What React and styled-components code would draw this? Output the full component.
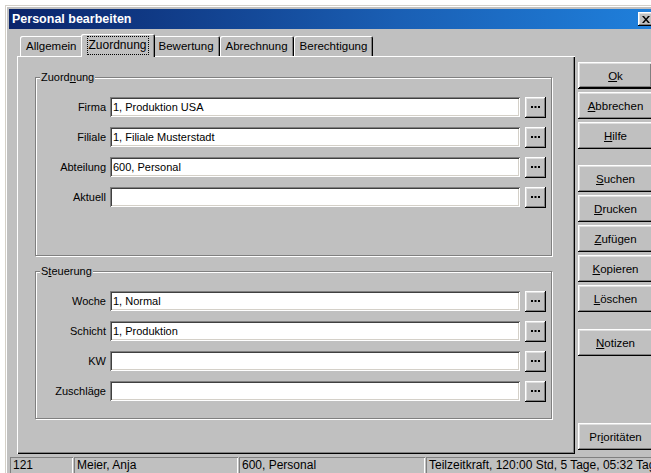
import React from 'react';
import styled, { createGlobalStyle } from 'styled-components';

const GlobalStyle = createGlobalStyle`
  html, body {
    margin: 0;
    padding: 0;
    background: #fff;
    overflow: hidden;
  }
  body {
    font-family: "Liberation Sans", Arial, sans-serif;
    font-size: 11px;
    color: #000;
  }
`;

const raised = `
  box-shadow: inset -1px -1px #000, inset 1px 1px #fff,
    inset -2px -2px #808080, inset 2px 2px #dfdfdf;
`;

const sunken = `
  box-shadow: inset 1px 1px #808080, inset -1px -1px #fff,
    inset 2px 2px #404040, inset -2px -2px #d4d0c8;
`;

const zuordnungRows = [
  { label: 'Firma', value: '1, Produktion USA' },
  { label: 'Filiale', value: '1, Filiale Musterstadt' },
  { label: 'Abteilung', value: '600, Personal' },
  { label: 'Aktuell', value: '' },
];

const steuerungRows = [
  { label: 'Woche', value: '1, Normal' },
  { label: 'Schicht', value: '1, Produktion' },
  { label: 'KW', value: '' },
  { label: 'Zuschläge', value: '' },
];

const tabs = ['Allgemein', 'Zuordnung', 'Bewertung', 'Abrechnung', 'Berechtigung'];

function Accel({ text, at }) {
  return (
    <>
      {text.slice(0, at)}
      <u>{text[at]}</u>
      {text.slice(at + 1)}
    </>
  );
}

function LookupRow({ label, value }) {
  return (
    <Row>
      <RowLabel>{label}</RowLabel>
      <TextBox>{value}</TextBox>
      <DotsButton>
        <svg width="9" height="3" viewBox="0 0 9 3">
          <rect x="0" y="0" width="2" height="2" fill="#000" />
          <rect x="3.5" y="0" width="2" height="2" fill="#000" />
          <rect x="7" y="0" width="2" height="2" fill="#000" />
        </svg>
      </DotsButton>
    </Row>
  );
}

function App() {
  return (
    <>
      <GlobalStyle />
      <Window>
        <TitleBar>
          <Title>Personal bearbeiten</Title>
          <CloseButton>
            <svg width="8" height="7" viewBox="0 0 8 7">
              <path d="M0 0h2l2 2.5L6 0h2L5 3.5 8 7H6L4 4.5 2 7H0l3-3.5z" fill="#000" />
            </svg>
          </CloseButton>
        </TitleBar>

        <Main>
          <TabArea>
            <TabStrip>
              {tabs.map((t) => (
                <Tab key={t} $active={t === 'Zuordnung'}>
                  {t === 'Zuordnung' ? <Focus>{t}</Focus> : t}
                </Tab>
              ))}
            </TabStrip>
            <Panel>
              <GroupBox $height={179}>
                <Caption>
                  <Accel text="Zuordnung" at={5} />
                </Caption>
                <Rows>
                  {zuordnungRows.map((r) => (
                    <LookupRow key={r.label} {...r} />
                  ))}
                </Rows>
              </GroupBox>
              <GroupBox $height={148}>
                <Caption>
                  <Accel text="Steuerung" at={1} />
                </Caption>
                <Rows>
                  {steuerungRows.map((r) => (
                    <LookupRow key={r.label} {...r} />
                  ))}
                </Rows>
              </GroupBox>
            </Panel>
          </TabArea>

          <ButtonColumn>
            <Button $default>
              <Accel text="Ok" at={0} />
            </Button>
            <Button>
              <Accel text="Abbrechen" at={0} />
            </Button>
            <Button>
              <Accel text="Hilfe" at={0} />
            </Button>
            <Gap $h={10} />
            <Button>
              <Accel text="Suchen" at={0} />
            </Button>
            <Button>
              <Accel text="Drucken" at={0} />
            </Button>
            <Button>
              <Accel text="Zufügen" at={0} />
            </Button>
            <Button>
              <Accel text="Kopieren" at={0} />
            </Button>
            <Button>
              <Accel text="Löschen" at={0} />
            </Button>
            <Gap $h={11} />
            <Button>
              <Accel text="Notizen" at={0} />
            </Button>
            <BottomButton>
              <Accel text="Prioritäten" at={2} />
            </BottomButton>
          </ButtonColumn>
        </Main>

        <StatusBar>
          <StatusCell $width={63}>121</StatusCell>
          <StatusCell $width={164}>Meier, Anja</StatusCell>
          <StatusCell $width={186}>600, Personal</StatusCell>
          <StatusCell $width={240}>Teilzeitkraft, 120:00 Std, 5 Tage, 05:32 Tage</StatusCell>
        </StatusBar>
      </Window>
    </>
  );
}

const Window = styled.div`
  width: 655px;
  height: 480px;
  margin: 5px 0 0 5px;
  padding: 4px;
  box-sizing: border-box;
  background: #c0c0c0;
  box-shadow: inset -1px -1px #000, inset 1px 1px #d4d0c8,
    inset -2px -2px #808080, inset 2px 2px #fff;
  display: flex;
  flex-direction: column;
`;

const TitleBar = styled.div`
  height: 20px;
  display: flex;
  align-items: center;
  justify-content: space-between;
  padding: 0 2px 0 3px;
  background: linear-gradient(90deg, #0a246a 0%, #1a5fb4 60%, #1f80dc 100%);
`;

const Title = styled.span`
  color: #fff;
  font-weight: bold;
  font-size: 12.5px;
`;

const CloseButton = styled.div`
  width: 16px;
  height: 14px;
  background: #c0c0c0;
  ${raised}
  display: flex;
  align-items: center;
  justify-content: center;
`;

const Main = styled.div`
  display: flex;
  padding: 5px 0 0 8px;
`;

const TabArea = styled.div`
  width: 558px;
  display: flex;
  flex-direction: column;
`;

const TabStrip = styled.div`
  height: 22px;
  display: flex;
  align-items: flex-end;
  padding-left: 3px;
`;

const Tab = styled.div`
  position: relative;
  height: ${(p) => (p.$active ? 23 : 20)}px;
  margin: ${(p) => (p.$active ? '0 -2px -1px' : '0')};
  z-index: ${(p) => (p.$active ? 1 : 0)};
  padding: 0 ${(p) => (p.$active ? 7 : 6)}px;
  padding-top: ${(p) => (p.$active ? 3 : 0)}px;
  box-sizing: border-box;
  display: flex;
  align-items: ${(p) => (p.$active ? 'flex-start' : 'center')};
  background: #c0c0c0;
  font-size: ${(p) => (p.$active ? 12 : 11.5)}px;
  border-radius: 2px 2px 0 0;
  box-shadow: inset 1px 1px #fff, inset -1px 0 #000, inset -2px 0 #808080;
`;

const Focus = styled.span`
  outline: 1px dotted #000;
  outline-offset: 0;
  padding: 1px 1px 2px;
  line-height: 14px;
`;

const Panel = styled.div`
  height: 398px;
  box-sizing: border-box;
  padding: 21px 0 0 18px;
  box-shadow: inset 1px 1px #fff, inset -1px -1px #000, inset -2px -2px #808080;
  display: flex;
  flex-direction: column;
  gap: 15px;
`;

const GroupBox = styled.div`
  position: relative;
  width: 517px;
  height: ${(p) => p.$height}px;
  box-sizing: border-box;
  border: 1px solid #808080;
  box-shadow: inset 1px 1px #fff, 1px 1px #fff;
  padding-top: 19px;
`;

const Caption = styled.span`
  position: absolute;
  top: -8px;
  left: 4px;
  padding: 0 1px;
  background: #c0c0c0;
  line-height: 14px;
`;

const Rows = styled.div`
  display: flex;
  flex-direction: column;
  gap: 10px;
`;

const Row = styled.div`
  height: 20px;
  display: flex;
  align-items: flex-start;
`;

const RowLabel = styled.span`
  width: 70px;
  margin-right: 4px;
  text-align: right;
  line-height: 20px;
`;

const TextBox = styled.div`
  width: 410px;
  height: 20px;
  box-sizing: border-box;
  padding: 0 3px;
  background: #fff;
  ${sunken}
  line-height: 20px;
  white-space: nowrap;
`;

const DotsButton = styled.div`
  width: 21px;
  height: 21px;
  margin-left: 5px;
  background: #c0c0c0;
  ${raised}
  display: flex;
  align-items: center;
  justify-content: center;
`;

const ButtonColumn = styled.div`
  width: 75px;
  margin-left: 3px;
  padding: 28px 0 4px;
  display: flex;
  flex-direction: column;
  gap: 3px;
`;

const Button = styled.div`
  height: 27px;
  flex-shrink: 0;
  display: flex;
  align-items: center;
  justify-content: center;
  background: #c0c0c0;
  font-size: 11.5px;
  ${(p) =>
    p.$default
      ? `box-shadow: inset -1px -1px #000, inset 1px 1px #fff,
        inset -2px -2px #000, inset 2px 2px #dfdfdf, inset -3px -3px #808080;`
      : raised}
`;

const BottomButton = styled(Button)`
  margin-top: auto;
`;

const Gap = styled.div`
  height: ${(p) => p.$h}px;
  flex-shrink: 0;
`;

const StatusBar = styled.div`
  display: flex;
  gap: 1px;
  margin: 3px 0 0 1px;
`;

const StatusCell = styled.div`
  width: ${(p) => p.$width}px;
  height: 17px;
  flex-shrink: 0;
  box-sizing: border-box;
  padding: 0 3px;
  line-height: 17px;
  white-space: nowrap;
  overflow: hidden;
  box-shadow: inset 1px 1px #808080, inset -1px -1px #fff;
  font-size: 12px;
`;

export default App;
